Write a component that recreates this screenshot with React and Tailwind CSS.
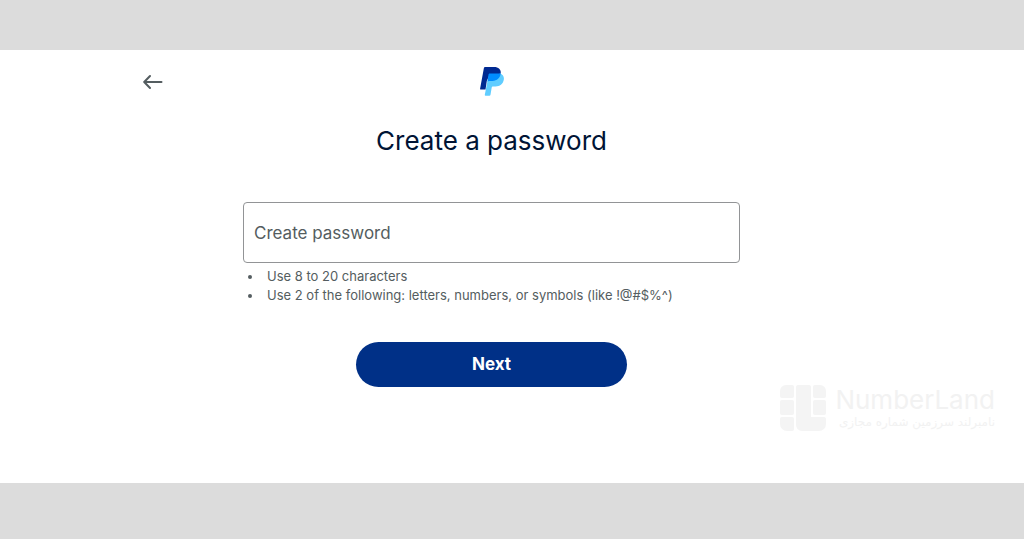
import React from "react";

function BackArrow() {
  return (
    <svg width="20" height="16" viewBox="0 0 20 16" fill="none" stroke="#545d60" strokeWidth="2" strokeLinecap="round" strokeLinejoin="round" aria-hidden="true">
      <path d="M18.500 8H1.500M7 2L1.200 8 7 14" />
    </svg>
  );
}

function PayPalLogo() {
  return (
    <svg width="24" height="29" viewBox="0 0 24 29" role="img" aria-label="PayPal">
      <path fill="#60cdff" d="M9 6.5h11.4c2.600 1.200 3.900 3.400 3.400 6.200-.9 4.400-3.900 6.700-8.300 6.700h-2.500c-.7 0-1.200.4-1.300 1.100l-1.200 7.200c-.1.600-.500 1-1.100 1H5.500c-.500 0-.800-.400-.700-.900z" />
      <path fill="#002991" d="M3.900 1.100C4 .400 4.600 0 5.200 0h8.900c4.300 0 7.200 2.600 6.600 6.500l-3.400 1H9.600L6.800 14l-1.300 8.600H.8c-.500 0-.800-.400-.700-.900z" />
      <path fill="#008cff" d="M8.500 7.600c.1-.700.700-1.100 1.300-1.100h10.900c-.500 4.400-3.700 7.400-8.300 7.400H9.400c-.900 0-1.600.500-1.900 1.300z" />
    </svg>
  );
}

function NumberLandMark() {
  return (
    <svg width="48" height="48" viewBox="0 0 48 48" fill="#f4f4f4" aria-hidden="true">
      <path d="M7 1h6a2 2 0 0 1 2 2v9a2 2 0 0 1-2 2H3a2 2 0 0 1-2-2V7a6 6 0 0 1 6-6z" />
      <rect x="1" y="16" width="14" height="15" rx="2" />
      <path d="M3 33h10a2 2 0 0 1 2 2v10a2 2 0 0 1-2 2H8a7 7 0 0 1-7-7v-5a2 2 0 0 1 2-2z" />
      <path d="M19 1h11a2 2 0 0 1 2 2v30h13a2 2 0 0 1 2 2v5a7 7 0 0 1-7 7H23a6 6 0 0 1-6-6V3a2 2 0 0 1 2-2z" />
      <path d="M36 1h5a6 6 0 0 1 6 6v5a2 2 0 0 1-2 2h-9a2 2 0 0 1-2-2V3a2 2 0 0 1 2-2z" />
      <rect x="34" y="16" width="13" height="15" rx="2" />
    </svg>
  );
}

export default function App() {
  return (
    <div className="min-h-screen flex flex-col bg-[#dcdcdc] pt-[50px] pb-14 font-[Inter,sans-serif]">
      <main className="relative flex-1 bg-white pl-4 pr-[57px] pt-[17px] pb-24">
        <div className="mx-auto max-w-[697px] flex flex-col items-center">
          <header className="w-full grid grid-cols-[1fr_auto_1fr] items-center">
            <button type="button" aria-label="Back" className="justify-self-start">
              <BackArrow />
            </button>
            <PayPalLogo />
          </header>
          <h1 className="mt-[27px] text-[26px] leading-9 text-[#001435]">Create a password</h1>
          <form className="mt-[43px] w-full max-w-[497px] flex flex-col" onSubmit={(e) => e.preventDefault()}>
            <input
              type="password"
              aria-label="Create password"
              placeholder="Create password"
              className="h-[61px] w-full rounded-[4px] border border-[#929496] bg-white px-[10px] text-[17px] text-[#001435] placeholder:text-[#545d60]"
            />
            <ul className="mt-1 list-disc pl-5 text-[13px] leading-[19px] text-[#545d60]">
              <li className="pl-1">Use 8 to 20 characters</li>
              <li className="pl-1">Use 2 of the following: letters, numbers, or symbols (like !@#$%^)</li>
            </ul>
            <button type="submit" className="mt-[37px] h-[45px] w-full max-w-[271px] self-center rounded-full bg-[#003087] pt-px text-[17px] font-bold text-white">
              Next
            </button>
          </form>
        </div>
        <div className="absolute right-[29px] bottom-[51px] flex items-center gap-2 text-[#f2f2f2]">
          <NumberLandMark />
          <div className="flex flex-col">
            <span className="text-[26px] leading-7">NumberLand</span>
            <span dir="rtl" lang="fa" className="font-['DejaVu_Sans',sans-serif] text-[12px] leading-4">نامبرلند سرزمین شماره مجازی</span>
          </div>
        </div>
      </main>
    </div>
  );
}
